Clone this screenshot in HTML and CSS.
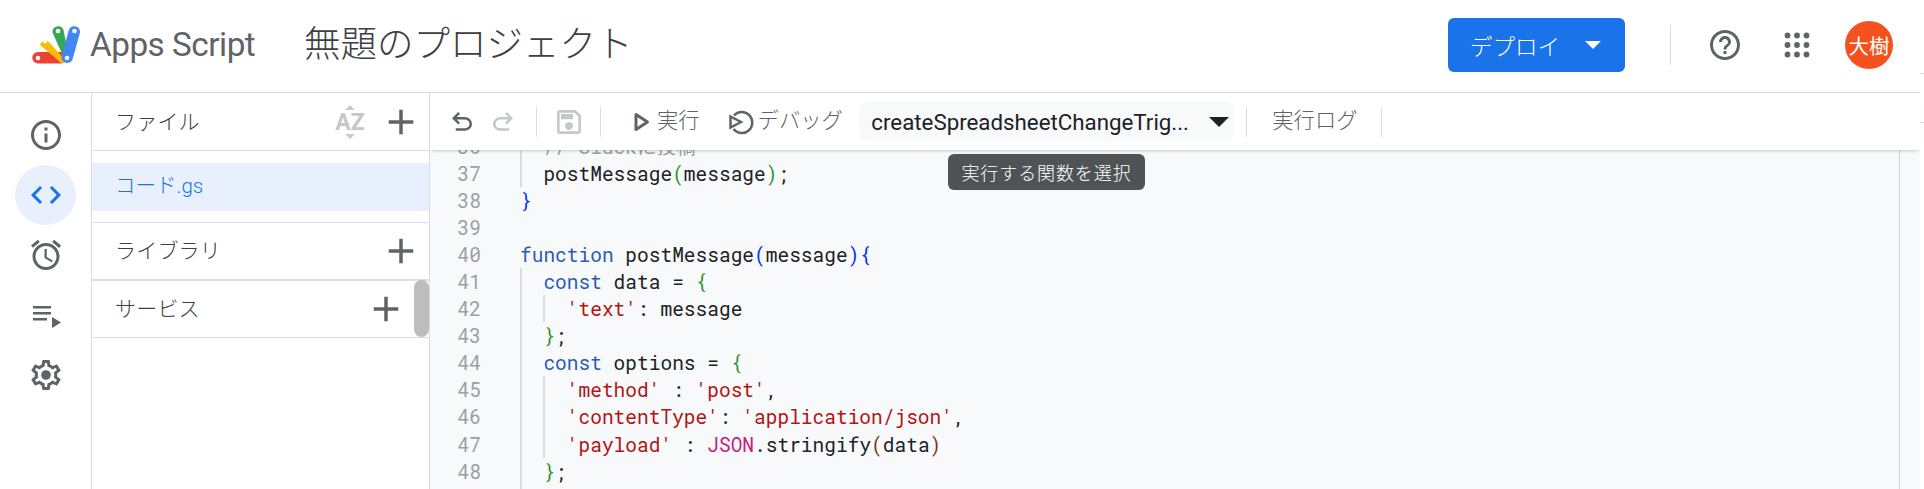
FILE: index.html
```html
<!DOCTYPE html>
<html lang="ja">
<head>
<meta charset="utf-8">
<title>Apps Script</title>
<link rel="stylesheet" href="styles.css">
</head>
<body>
<div class="edge"><i class="tick tick-a"></i><i class="tick tick-b"></i></div>
<div class="app">
  <header class="topbar">
    <svg class="logo" viewBox="26 24 60 40" width="60" height="40">
      <path d="M38 51h24l5 6-5 5.500H38a5.750 5.750 0 0 1 0-11.500z" fill="#ea4335"/>
      <path d="M40 44a5.700 5.700 0 0 1 8-4l19 21-5 1.500z" fill="#fbbc04"/>
      <path d="M52.500 31.500a5.700 5.700 0 0 1 11-2.500l6 30-3 3.500z" fill="#34a853"/>
      <path d="M69 28.500a5.800 5.800 0 0 1 11 3l-7.500 27a5.800 5.800 0 0 1-11-3z" fill="#4285f4"/>
      <g fill="#fff"><circle cx="38" cy="57" r="2.300"/><circle cx="45" cy="40" r="2.300"/><circle cx="58" cy="30" r="2.300"/><circle cx="74.500" cy="30" r="2.300"/><circle cx="67" cy="57" r="2.300"/></g>
    </svg>
    <span class="brand">Apps Script</span>
    <h1 class="title">無題のプロジェクト</h1>
    <div class="top-actions">
      <button class="deploy"><span>デプロイ</span><i class="caret caret-white"></i></button>
      <span class="top-divider"></span>
      <svg class="icon help" viewBox="0 0 24 24"><path d="M11 18h2v-2h-2v2zm1-16C6.480 2 2 6.480 2 12s4.480 10 10 10 10-4.480 10-10S17.520 2 12 2zm0 18c-4.410 0-8-3.590-8-8s3.590-8 8-8 8 3.590 8 8-3.590 8-8 8zm0-14c-2.210 0-4 1.790-4 4h2c0-1.100.9-2 2-2s2 .9 2 2c0 2-3 1.750-3 5h2c0-2.250 3-2.500 3-5 0-2.210-1.790-4-4-4z"/></svg>
      <svg class="icon apps" viewBox="0 0 26 26"><g><circle cx="3.500" cy="3.500" r="2.900"/><circle cx="13" cy="3.500" r="2.900"/><circle cx="22.500" cy="3.500" r="2.900"/><circle cx="3.500" cy="13" r="2.900"/><circle cx="13" cy="13" r="2.900"/><circle cx="22.500" cy="13" r="2.900"/><circle cx="3.500" cy="22.500" r="2.900"/><circle cx="13" cy="22.500" r="2.900"/><circle cx="22.500" cy="22.500" r="2.900"/></g></svg>
      <span class="avatar">大樹</span>
    </div>
  </header>
  <div class="main">
    <nav class="rail">
      <svg class="icon rail-icon" viewBox="0 0 24 24"><path d="M11 7h2v2h-2zm0 4h2v6h-2zm1-9C6.480 2 2 6.480 2 12s4.480 10 10 10 10-4.480 10-10S17.520 2 12 2zm0 18c-4.410 0-8-3.590-8-8s3.590-8 8-8 8 3.590 8 8-3.590 8-8 8z"/></svg>
      <span class="rail-active"><svg class="icon rail-icon code-icon" viewBox="0 0 24 24"><path d="M9.400 16.600L4.800 12l4.600-4.600L8 6l-6 6 6 6 1.400-1.400zm5.200 0l4.600-4.600-4.600-4.600L16 6l6 6-6 6-1.400-1.400z"/></svg></span>
      <svg class="icon rail-icon" viewBox="0 0 24 24"><path d="M22 5.720l-4.600-3.860-1.290 1.530 4.600 3.860L22 5.720zM7.880 3.390L6.600 1.860 2 5.710l1.290 1.530 4.590-3.850zM12.500 8H11v6l4.750 2.850.75-1.230-4-2.370V8zM12 4c-4.970 0-9 4.030-9 9s4.030 9 9 9 9-4.030 9-9-4.030-9-9-9zm0 16c-3.870 0-7-3.130-7-7s3.130-7 7-7 7 3.130 7 7-3.130 7-7 7z"/></svg>
      <svg class="icon rail-icon" viewBox="0 0 36 36"><path d="M5 9h18v2.500H5zM5 15h18v2.500H5zM5 21h14v2.500H5zM24 20l9 5.500-9 5.500z"/></svg>
      <svg class="icon rail-icon" viewBox="0 0 24 24"><path d="M19.430 12.980c.04-.32.07-.64.07-.98 0-.34-.03-.66-.07-.98l2.110-1.650c.19-.15.24-.42.12-.64l-2-3.460c-.09-.16-.26-.25-.44-.25-.06 0-.12.01-.17.03l-2.490 1c-.52-.4-1.080-.73-1.690-.98l-.38-2.650C14.460 2.180 14.250 2 14 2h-4c-.25 0-.46.18-.49.42l-.38 2.650c-.61.25-1.170.59-1.690.98l-2.490-1c-.06-.02-.12-.03-.18-.03-.17 0-.34.09-.43.25l-2 3.460c-.13.22-.07.49.12.64l2.110 1.650c-.04.32-.07.65-.07.98 0 .33.03.66.07.98l-2.110 1.650c-.19.15-.24.42-.12.64l2 3.460c.09.16.26.25.44.25.06 0 .12-.01.17-.03l2.490-1c.52.4 1.080.73 1.690.98l.38 2.650c.03.24.24.42.49.42h4c.25 0 .46-.18.49-.42l.38-2.650c.61-.25 1.170-.59 1.690-.98l2.490 1c.06.02.12.03.18.03.17 0 .34-.09.43-.25l2-3.460c.12-.22.07-.49-.12-.64l-2.110-1.650zm-1.980-1.710c.04.31.05.52.05.73 0 .21-.02.43-.05.73l-.14 1.130.89.7 1.080.84-.7 1.210-1.270-.51-1.040-.42-.9.68c-.43.32-.84.56-1.250.73l-1.060.43-.16 1.130-.2 1.350h-1.400l-.19-1.350-.16-1.130-1.060-.43c-.43-.18-.83-.41-1.230-.71l-.91-.7-1.060.43-1.270.51-.7-1.210 1.080-.84.89-.7-.14-1.130c-.03-.31-.05-.54-.05-.74s.02-.43.05-.73l.14-1.130-.89-.7-1.080-.84.7-1.210 1.270.51 1.040.42.9-.68c.43-.32.84-.56 1.250-.73l1.060-.43.16-1.130.2-1.350h1.390l.19 1.350.16 1.130 1.060.43c.43.18.83.41 1.230.71l.91.7 1.060-.43 1.270-.51.7 1.210-1.070.85-.89.7.14 1.130z"/><circle cx="12" cy="12" r="3.200"/></svg>
    </nav>
    <aside class="sidebar">
      <section class="side-head">
        <span class="side-label">ファイル</span>
        <svg class="az" viewBox="0 0 36 36" width="36" height="36"><path class="az-arrow" d="M18 1l5 5H13zM18 35l5-5H13z"/><text class="az-text" x="18" y="26" text-anchor="middle">AZ</text></svg>
        <svg class="icon plus" viewBox="0 0 24 24"><path d="M19 13h-6v6h-2v-6H5v-2h6V5h2v6h6v2z"/></svg>
      </section>
      <section class="file-list"><div class="file-row">コード.gs</div></section>
      <section class="side-head lib">
        <span class="side-label">ライブラリ</span>
        <svg class="icon plus" viewBox="0 0 24 24"><path d="M19 13h-6v6h-2v-6H5v-2h6V5h2v6h6v2z"/></svg>
      </section>
      <section class="side-head services">
        <span class="side-label">サービス</span>
        <svg class="icon plus" viewBox="0 0 24 24"><path d="M19 13h-6v6h-2v-6H5v-2h6V5h2v6h6v2z"/></svg>
      </section>
      <div class="scroll-thumb"></div>
    </aside>
    <div class="work">
      <div class="toolbar">
        <svg class="icon tool undo" viewBox="0 0 24 24"><path d="M7 19v-2h7.100q1.575 0 2.737-1 1.163-1 1.163-2.500T16.837 11q-1.162-1-2.737-1H7.800l2.600 2.600L9 14 4 9l5-5 1.400 1.400L7.800 8h6.300q2.425 0 4.163 1.575Q20 11.150 20 13.500t-1.737 3.925Q16.525 19 14.100 19Z"/></svg>
        <svg class="icon tool redo" viewBox="0 0 24 24"><path transform="matrix(-1 0 0 1 24 0)" d="M7 19v-2h7.100q1.575 0 2.737-1 1.163-1 1.163-2.500T16.837 11q-1.162-1-2.737-1H7.800l2.600 2.600L9 14 4 9l5-5 1.400 1.400L7.800 8h6.300q2.425 0 4.163 1.575Q20 11.150 20 13.500t-1.737 3.925Q16.525 19 14.100 19Z"/></svg>
        <span class="tool-div d1"></span>
        <svg class="icon tool save" viewBox="0 0 24 24"><path d="M17 3H5c-1.110 0-2 .9-2 2v14c0 1.100.89 2 2 2h14c1.100 0 2-.9 2-2V7l-4-4zm2 16H5V5h11.170L19 7.830V19zm-7-7c-1.660 0-3 1.340-3 3s1.340 3 3 3 3-1.340 3-3-1.340-3-3-3zM6 6h9v4H6z"/></svg>
        <span class="tool-div d2"></span>
        <svg class="run-icon" viewBox="0 0 16 20" width="16" height="20"><path d="M2 2.500L13.500 10 2 17.500z"/></svg>
        <span class="tool-text run-text">実行</span>
        <svg class="debug-icon" viewBox="0 0 26 26" width="26" height="26"><path class="debug-arc" d="M6 6.500A10.500 10.500 0 1 1 5.500 20"/><path class="debug-play" d="M2.500 7.500L13 13 2.500 18.500z"/></svg>
        <span class="tool-text debug-text">デバッグ</span>
        <div class="fn-select"><span class="fn-name">createSpreadsheetChangeTrig...</span><i class="caret caret-dark"></i></div>
        <span class="tool-div d3"></span>
        <span class="tool-text log-text">実行ログ</span>
        <span class="tool-div d4"></span>
      </div>
      <div class="editor">
        <div class="code">
          <div class="ln"><span class="no">36</span><span class="src"><i class="g"></i>  <span class="cm">// Slackに投稿</span></span></div>
          <div class="ln"><span class="no">37</span><span class="src"><i class="g"></i>  postMessage<span class="b2">(</span>message<span class="b2">)</span>;</span></div>
          <div class="ln"><span class="no">38</span><span class="src"><span class="b1">}</span></span></div>
          <div class="ln"><span class="no">39</span><span class="src"></span></div>
          <div class="ln"><span class="no">40</span><span class="src"><span class="kw">function</span> postMessage<span class="b1">(</span>message<span class="b1">){</span></span></div>
          <div class="ln"><span class="no">41</span><span class="src"><i class="g"></i>  <span class="kw">const</span> data = <span class="b2">{</span></span></div>
          <div class="ln"><span class="no">42</span><span class="src"><i class="g"></i><i class="g g2"></i>    <span class="st">'text'</span>: message</span></div>
          <div class="ln"><span class="no">43</span><span class="src"><i class="g"></i>  <span class="b2">}</span>;</span></div>
          <div class="ln"><span class="no">44</span><span class="src"><i class="g"></i>  <span class="kw">const</span> options = <span class="b2">{</span></span></div>
          <div class="ln"><span class="no">45</span><span class="src"><i class="g"></i><i class="g g2"></i>    <span class="st">'method'</span> : <span class="st">'post'</span>,</span></div>
          <div class="ln"><span class="no">46</span><span class="src"><i class="g"></i><i class="g g2"></i>    <span class="st">'contentType'</span>: <span class="st">'application/json'</span>,</span></div>
          <div class="ln"><span class="no">47</span><span class="src"><i class="g"></i><i class="g g2"></i>    <span class="st">'payload'</span> : <span class="js">JSON</span>.stringify<span class="b3">(</span>data<span class="b3">)</span></span></div>
          <div class="ln"><span class="no">48</span><span class="src"><i class="g"></i>  <span class="b2">}</span>;</span></div>
          <div class="ln"><span class="no"></span><span class="src"><i class="g"></i></span></div>
        </div>
        <div class="ruler"></div>
      </div>
      <div class="tooltip">実行する関数を選択</div>
    </div>
  </div>
</div>
</body>
</html>
```
FILE: styles.css
```css
* { box-sizing: border-box; }
html, body { margin: 0; height: 489px; overflow: hidden; background: #fff; }
body { font-family: "Roboto", "Noto Sans CJK JP", sans-serif; color: #3c4043; }
.app { width: 1920px; height: 489px; display: flex; flex-direction: column; }
.edge { position: absolute; left: 1920px; top: 0; width: 4px; height: 489px; }
.tick { position: absolute; left: 0; width: 4px; height: 1px; background: #dadce0; }
.tick-a { top: 73px; }
.tick-b { top: 122px; }
.icon { fill: #5f6368; display: block; flex: none; }

.topbar { height: 93px; flex: none; display: flex; align-items: center; border-bottom: 1px solid #dadce0; padding: 0 0 3px 26px; }
.logo { flex: none; }
.brand { font-family: "Roboto", sans-serif; font-size: 33.300px; color: #5f6368; margin-left: 4px; letter-spacing: -.5px; width: 214px; white-space: nowrap; }
.title { margin: 0 0 4px; font-family: "Noto Sans CJK JP", sans-serif; font-size: 36.500px; font-weight: 300; color: #3c4043; white-space: nowrap; line-height: 1; }
.top-actions { margin-left: auto; display: flex; align-items: center; }
.deploy { width: 177px; height: 54px; border: 0; border-radius: 6px; background: #1a73e8; color: #fff; font-family: "Noto Sans CJK JP", sans-serif; font-size: 22.500px; font-weight: 300; display: flex; align-items: center; padding: 0 24px 0 22px; justify-content: space-between; }
.caret { display: block; width: 0; height: 0; border-style: solid; border-color: transparent; }
.caret-white { border-width: 8px 8px 0; border-top-color: #fff; }
.top-divider { width: 1px; height: 40px; background: #dadce0; margin-left: 45px; }
.help { width: 36px; height: 36px; margin-left: 36px; }
.apps { width: 26px; height: 26px; margin-left: 41px; }
.avatar { width: 48px; height: 48px; border-radius: 50%; background: #f4511e; color: #fff; font-family: "Noto Sans CJK JP", sans-serif; font-size: 20.500px; display: flex; align-items: center; justify-content: center; margin-left: 35px; margin-right: 27px; }

.main { flex: 1; display: flex; min-height: 0; }
.rail { width: 92px; flex: none; border-right: 1px solid #dadce0; display: flex; flex-direction: column; align-items: center; padding-top: 24px; }
.rail-icon { width: 36px; height: 36px; margin-bottom: 24px; }
.rail-active { width: 61px; height: 60px; margin-bottom: 12px; margin-top: -12px; border-radius: 50%; background: #e8f0fe; display: flex; align-items: center; justify-content: center; }
.code-icon { fill: #1a73e8; margin: 0; }

.sidebar { width: 338px; flex: none; border-right: 1px solid #dadce0; position: relative; }
.side-head { height: 58px; display: flex; align-items: center; padding: 0 7px 0 23px; border-bottom: 1px solid #dadce0; }
.side-head .plus { width: 42px; height: 42px; }
.side-label { font-family: "Noto Sans CJK JP", sans-serif; font-size: 21px; font-weight: 300; letter-spacing: .2px; color: #3c4043; margin-right: auto; padding-bottom: 4px; }
.az { flex: none; margin-right: 12px; }
.az-arrow { fill: #c8cacd; }
.az-text { font-family: "Roboto", sans-serif; font-size: 23px; font-weight: 700; fill: #c4c7cb; }
.file-list { height: 72px; padding-top: 12px; border-bottom: 1px solid #dadce0; }
.file-row { height: 48px; background: #e8f0fe; color: #1a73e8; font-family: "Roboto", "Noto Sans CJK JP", sans-serif; font-size: 20.500px; font-weight: 300; line-height: 46px; padding-left: 23px; }
.lib { height: 58px; border-bottom-width: 2px; }
.services { height: 57px; padding-right: 22px; }
.scroll-thumb { position: absolute; right: 0; top: 187px; width: 15px; height: 57px; border-radius: 8px; background: #bdbdbd; }

.work { flex: 1; min-width: 0; position: relative; display: flex; flex-direction: column; background: #f8f9fa; }
.toolbar { height: 57px; flex: none; background: #fff; display: flex; align-items: center; position: relative; z-index: 2; box-shadow: 0 3px 3px -2px rgba(60,64,67,.25); padding-left: 17px; }
.tool { width: 30px; height: 30px; }
.undo { fill: #5f6368; }
.redo { fill: #c4c7cb; margin-left: 11px; }
.save { fill: #c4c7cb; width: 32px; height: 32px; margin-left: 16px; }
.tool-div { display: block; flex: none; width: 1px; height: 30px; background: #dadce0; }
.d1 { margin-left: 18px; }
.d2 { margin-left: 15px; }
.d3 { margin-left: 12px; }
.d4 { margin-left: 23px; }
.run-icon { flex: none; margin-left: 33px; fill: none; stroke: #5f6368; stroke-width: 3; stroke-linejoin: round; }
.tool-text { font-family: "Noto Sans CJK JP", sans-serif; font-size: 21.300px; font-weight: 300; color: #5f6368; white-space: nowrap; padding-bottom: 6px; }
.run-text { margin-left: 7px; }
.debug-icon { flex: none; margin-left: 28px; fill: none; stroke: #5f6368; stroke-width: 2.500; }
.debug-text { margin-left: 4px; }
.fn-select { width: 375px; height: 39px; margin-left: 16.500px; border-radius: 8px; background: #f8f9fa; display: flex; align-items: center; padding: 0 5px 0 12px; justify-content: space-between; }
.fn-name { font-family: "Roboto", sans-serif; font-size: 22.300px; color: #202124; white-space: nowrap; }
.caret-dark { border-width: 10px 10px 0; border-top-color: #202124; }
.log-text { margin-left: 25px; }

.editor { flex: 1; min-height: 0; overflow: hidden; position: relative; }
.code { margin-top: -17px; font-family: "Roboto Mono", "Liberation Mono", "Noto Sans CJK JP", monospace; font-size: 19.500px; }
.ln { height: 27.050px; line-height: 27.050px; display: flex; white-space: pre; }
.no { width: 51px; flex: none; text-align: right; color: #9aa0a6; }
.src { margin-left: 39px; color: #202124; position: relative; flex: 1; }
.g { position: absolute; left: 0; top: 0; bottom: 0; width: 2px; background: #dadce0; }
.g2 { left: 23px; }
.kw { color: #2a5cb3; }
.st { color: #b31412; }
.js { color: #c5227e; }
.cm { color: #9aa0a6; }
.b1 { color: #0431fa; }
.b2 { color: #319331; }
.b3 { color: #7b3814; }
.ruler { position: absolute; right: 20px; top: 0; bottom: 0; width: 1px; background: #d3d3d3; }
.tooltip { position: absolute; left: 518px; top: 61px; height: 36px; width: 197px; z-index: 3; border-radius: 6px; background: #505356; color: #fff; font-family: "Noto Sans CJK JP", sans-serif; font-size: 18px; font-weight: 300; letter-spacing: .9px; text-align: center; line-height: 36px; white-space: nowrap; }
```
